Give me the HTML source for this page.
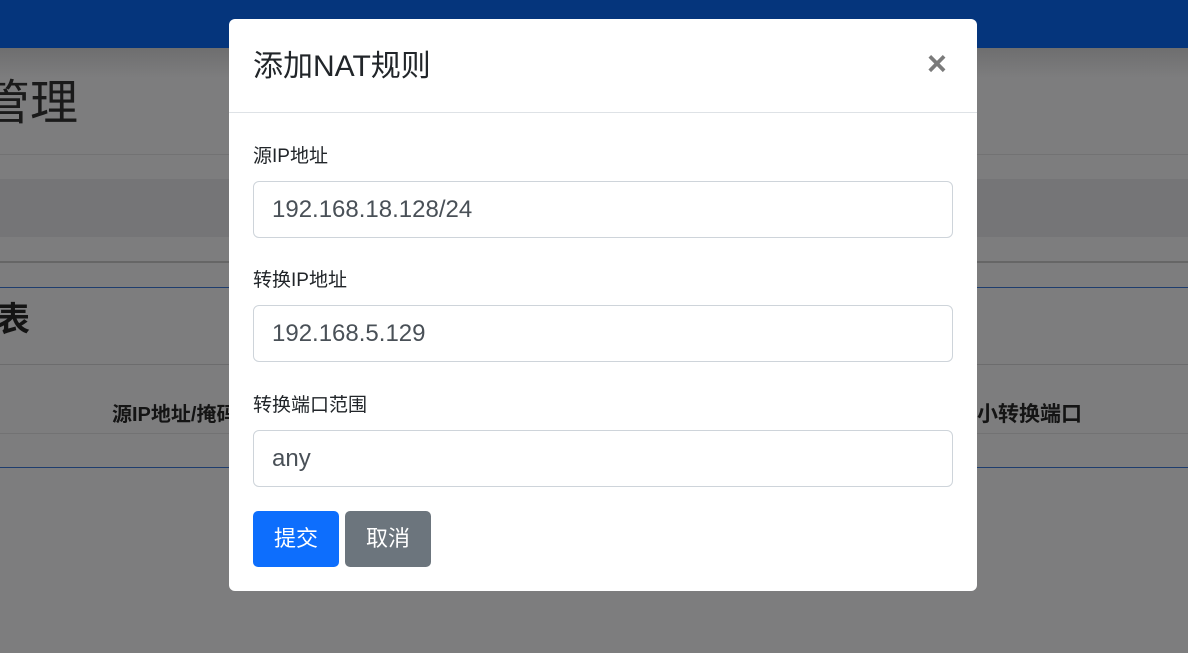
<!DOCTYPE html>
<html><head><meta charset="utf-8"><style>
*{box-sizing:border-box;margin:0;padding:0}
body{width:1188px;height:653px;overflow:hidden;background:#7d7d7e;font-family:"Liberation Sans","Noto Sans CJK SC",sans-serif;position:relative}
.top{position:absolute;left:0;top:0;width:1188px;height:48px;background:#05357c}
.abs{position:absolute}
.modal{position:absolute;left:229px;top:19px;width:748px;height:572px;background:#fff;border-radius:6px}
.hdr{height:94px;border-bottom:1px solid #dee2e6;position:relative}
.hdr h5{position:absolute;left:24px;top:30px;font-size:30px;font-weight:400;color:#212529;line-height:36px}
.x{position:absolute;left:698px;top:30px;font-size:34px;color:#7b7b7b;font-weight:bold;line-height:30px}
.lbl{position:absolute;left:24px;font-size:19px;color:#212529}
.inp{position:absolute;left:24px;width:700px;height:57px;border:1px solid #ced4da;border-radius:6px;font-size:24px;color:#495057;padding:13px 18px;line-height:30px}
.btn{position:absolute;top:492px;height:56px;border-radius:5px;color:#fff;font-size:22px;line-height:56px;text-align:center}
</style></head><body>
<div class="top"></div>
<div class="abs" style="left:0;top:48px;width:1188px;height:30px;background:linear-gradient(#6e6e6f,#7d7d7e)"></div>
<div class="abs" style="left:-18px;top:74px;font-size:48px;color:#1a1a1a;line-height:60px">管理</div>
<div class="abs" style="left:0;top:154px;width:1188px;height:1px;background:#727273"></div>
<div class="abs" style="left:0;top:179px;width:1188px;height:58px;background:#757577"></div>
<div class="abs" style="left:0;top:261px;width:1188px;height:2px;background:#666"></div>
<div class="abs" style="left:0;top:287px;width:1188px;height:1px;background:#1e3d6e"></div>
<div class="abs" style="left:-4px;top:298px;font-size:34px;font-weight:bold;color:#141414;line-height:44px">表</div>
<div class="abs" style="left:0;top:364px;width:1188px;height:1px;background:#6c6c6d"></div>
<div class="abs" style="left:112px;top:398px;font-size:20px;font-weight:bold;color:#141414">源IP地址/掩码</div>
<div class="abs" style="left:977px;top:398px;font-size:21px;font-weight:bold;color:#141414">小转换端口</div>
<div class="abs" style="left:0;top:433px;width:1188px;height:1px;background:#727273"></div>
<div class="abs" style="left:0;top:467px;width:1188px;height:1px;background:#1e3d6e"></div>
<div class="modal">
<div class="hdr"><h5>添加NAT规则</h5><div class="x">×</div></div>
<div class="lbl" style="top:122px">源IP地址</div>
<div class="inp" style="top:162px">192.168.18.128/24</div>
<div class="lbl" style="top:246px">转换IP地址</div>
<div class="inp" style="top:286px">192.168.5.129</div>
<div class="lbl" style="top:371px">转换端口范围</div>
<div class="inp" style="top:411px">any</div>
<div class="btn" style="left:24px;width:86px;background:#0d6efd">提交</div>
<div class="btn" style="left:116px;width:86px;background:#6c757d">取消</div>
</div>
</body></html>
